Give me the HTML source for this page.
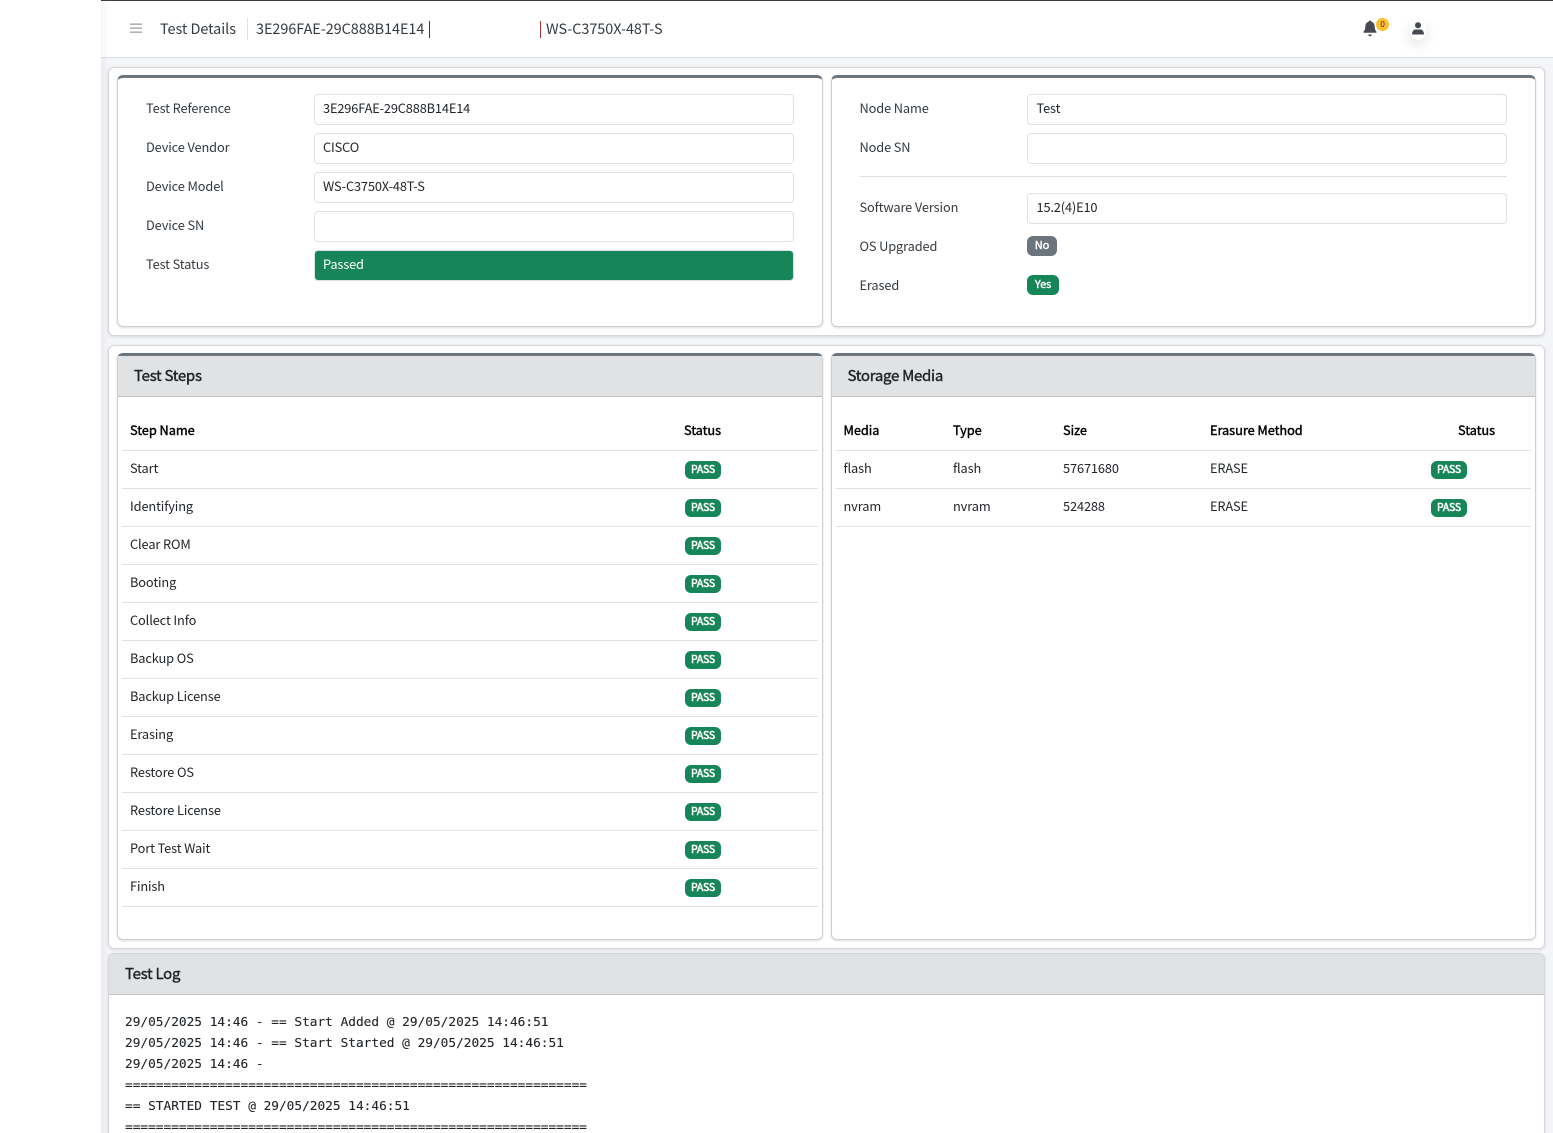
<!DOCTYPE html>
<html><head><meta charset="utf-8">
<style>
*{box-sizing:border-box}
html,body{margin:0;padding:0;width:1553px;height:1133px;overflow:hidden;background:#fff}
body{font-family:"Noto Sans CJK JP","Liberation Sans",sans-serif;font-size:12.8px;letter-spacing:-.12px;color:#212529;position:relative}
.a{position:absolute}
.t{position:absolute;white-space:nowrap;line-height:20px;height:20px;transform:translateY(-1px)}
.t.h{font-size:14.4px;letter-spacing:-.03px;color:#343a40;transform:none}
.lbl{color:#343a40}
.card{position:absolute;background:#fff;border:1px solid #d6d7da;border-radius:6px;box-shadow:0 1px 3px rgba(0,0,0,.12)}
.in{position:absolute;background:#fff;border:1px solid #cfd0d3;border-top:3px solid #6c757d;border-radius:6px;box-shadow:0 1px 2px rgba(0,0,0,.14)}
.hd{position:absolute;background:#e1e2e4;border-bottom:1px solid #bfc1c4;font-weight:400;font-size:15px;letter-spacing:-.28px;-webkit-text-stroke:.4px #212529;color:#212529}
.inp{position:absolute;background:#fff;border:1px solid #dee2e6;border-radius:4px;height:31px;line-height:26px;padding-left:8px;color:#212529;font-size:12.8px;letter-spacing:-.15px}
.ln{position:absolute;height:1px;background:#dee2e6}
.b{font-weight:400;color:#000;letter-spacing:-.06px;-webkit-text-stroke:.4px #000}
.p{position:absolute;width:36px;height:18px;border-radius:6px;background:#168558;color:#fff;font-size:10.5px;font-weight:400;letter-spacing:-.2px;-webkit-text-stroke:.5px #fff;text-align:center;line-height:18px}
.log{position:absolute;left:125px;font-family:"DejaVu Sans Mono","Liberation Mono",monospace;font-size:12.8px;letter-spacing:-.005px;line-height:21px;height:21px;white-space:pre;color:#212529;-webkit-text-stroke:.1px #212529}
</style></head>
<body>
<div class="a" style="left:101px;top:0;width:1452px;height:1133px;background:#f4f5f8"></div>
<div class="a" style="left:101px;top:0;width:1452px;height:58px;background:#fff;border-top:1px solid #3b3f43;border-bottom:1px solid #dcdde0"></div>
<div class="a" style="left:101px;top:1px;width:8px;height:1132px;background:linear-gradient(90deg,rgba(0,0,0,.035),rgba(0,0,0,0))"></div>

<svg class="a" style="left:130px;top:23px" width="12" height="11" viewBox="0 0 12 11"><path d="M0 1.200h12M0 5.200h12M0 9.200h12" stroke="#b0b4b8" stroke-width="1.600"/></svg>
<div class="t h" style="left:160px;top:19px">Test Details</div>
<div class="a" style="left:247px;top:18px;width:1px;height:22px;background:#dee2e6"></div>
<div class="t h" style="left:256px;top:19px">3E296FAE-29C888B14E14</div>
<div class="a" style="left:429px;top:21px;width:1px;height:17px;background:#343a40"></div>
<div class="a" style="left:540px;top:21px;width:1px;height:17px;background:#a33"></div>
<div class="t h" style="left:546px;top:19px">WS-C3750X-48T-S</div>

<svg class="a" style="left:1363px;top:20px" width="14" height="17" viewBox="0 0 14 17"><path d="M7 0.500c.8 0 1.300.6 1.300 1.300 2.400.6 3.400 2.600 3.400 5 0 2.600.7 3.700 1.800 5v1H.5v-1c1.100-1.300 1.800-2.400 1.800-5 0-2.400 1-4.400 3.400-5C5.700 1.100 6.200.5 7 .5zM5.200 14.500h3.600C8.800 15.500 8 16.300 7 16.300s-1.800-.8-1.800-1.800z" fill="#454a50"/></svg>
<div class="a" style="left:1376px;top:18px;width:13px;height:13px;border-radius:50%;background:#fdbf2d;color:#333;font-size:8.500px;text-align:center;line-height:13px">0</div>
<div class="a" style="left:1410px;top:18px;width:16px;height:22px;border-radius:8px;background:#fff;box-shadow:0 6px 12px rgba(0,0,0,.1)"></div>
<svg class="a" style="left:1412px;top:22px" width="12" height="13" viewBox="0 0 12 13"><circle cx="6" cy="3.200" r="3" fill="#454a50"/><path d="M0 12.500c0-3.500 2-5 3.500-5h5c1.500 0 3.500 1.500 3.500 5z" fill="#454a50"/></svg>

<!-- Card 1 -->
<div class="card" style="left:108px;top:67px;width:1437px;height:269px"></div>
<div class="in" style="left:117px;top:75px;width:706px;height:252px"></div>
<div class="in" style="left:831px;top:75px;width:705px;height:252px"></div>

<div class="t lbl" style="left:146px;top:99px">Test Reference</div>
<div class="inp" style="left:314px;top:94px;width:480px">3E296FAE-29C888B14E14</div>
<div class="t lbl" style="left:146px;top:138px">Device Vendor</div>
<div class="inp" style="left:314px;top:133px;width:480px">CISCO</div>
<div class="t lbl" style="left:146px;top:177px">Device Model</div>
<div class="inp" style="left:314px;top:172px;width:480px">WS-C3750X-48T-S</div>
<div class="t lbl" style="left:146px;top:216px">Device SN</div>
<div class="inp" style="left:314px;top:211px;width:480px"></div>
<div class="t lbl" style="left:146px;top:255px">Test Status</div>
<div class="inp" style="left:314px;top:250px;width:480px;background:#168558;color:#fff">Passed</div>

<div class="t lbl" style="left:859.5px;top:99px">Node Name</div>
<div class="inp" style="left:1027px;top:94px;width:480px;padding-left:8.5px">Test</div>
<div class="t lbl" style="left:859.5px;top:138px">Node SN</div>
<div class="inp" style="left:1027px;top:133px;width:480px"></div>
<div class="ln" style="left:860px;top:176px;width:647px"></div>
<div class="t lbl" style="left:859.5px;top:198px">Software Version</div>
<div class="inp" style="left:1027px;top:193px;width:480px;padding-left:8.5px">15.2(4)E10</div>
<div class="t lbl" style="left:859.5px;top:237px">OS Upgraded</div>
<div class="a" style="left:1027px;top:236px;width:30px;height:20px;border-radius:6px;background:#6c757d;color:#fff;font-size:11px;-webkit-text-stroke:.4px #fff;text-align:center;line-height:18px">No</div>
<div class="t lbl" style="left:859.5px;top:276px">Erased</div>
<div class="a" style="left:1027px;top:275px;width:32px;height:20px;border-radius:6px;background:#168558;color:#fff;font-size:11px;-webkit-text-stroke:.4px #fff;text-align:center;line-height:18px">Yes</div>

<!-- Card 2 -->
<div class="card" style="left:108px;top:345px;width:1437px;height:604px"></div>
<div class="in" style="left:117px;top:353px;width:706px;height:587px"></div>
<div class="in" style="left:831px;top:353px;width:705px;height:587px"></div>
<div class="hd" style="left:118px;top:356px;width:704px;height:41px;padding-left:16px;line-height:40px">Test Steps</div>
<div class="hd" style="left:832px;top:356px;width:703px;height:41px;padding-left:15.5px;line-height:40px">Storage Media</div>

<div class="t b" style="left:130px;top:421px">Step Name</div>
<div class="t b" style="left:684px;top:421px">Status</div>
<div class="ln" style="left:122px;top:450px;width:696px"></div>

<div class="t" style="left:130px;top:459px">Start</div><div class="p" style="left:685px;top:461px">PASS</div><div class="ln" style="left:122px;top:488px;width:696px"></div>
<div class="t" style="left:130px;top:497px">Identifying</div><div class="p" style="left:685px;top:499px">PASS</div><div class="ln" style="left:122px;top:526px;width:696px"></div>
<div class="t" style="left:130px;top:535px">Clear ROM</div><div class="p" style="left:685px;top:537px">PASS</div><div class="ln" style="left:122px;top:564px;width:696px"></div>
<div class="t" style="left:130px;top:573px">Booting</div><div class="p" style="left:685px;top:575px">PASS</div><div class="ln" style="left:122px;top:602px;width:696px"></div>
<div class="t" style="left:130px;top:611px">Collect Info</div><div class="p" style="left:685px;top:613px">PASS</div><div class="ln" style="left:122px;top:640px;width:696px"></div>
<div class="t" style="left:130px;top:649px">Backup OS</div><div class="p" style="left:685px;top:651px">PASS</div><div class="ln" style="left:122px;top:678px;width:696px"></div>
<div class="t" style="left:130px;top:687px">Backup License</div><div class="p" style="left:685px;top:689px">PASS</div><div class="ln" style="left:122px;top:716px;width:696px"></div>
<div class="t" style="left:130px;top:725px">Erasing</div><div class="p" style="left:685px;top:727px">PASS</div><div class="ln" style="left:122px;top:754px;width:696px"></div>
<div class="t" style="left:130px;top:763px">Restore OS</div><div class="p" style="left:685px;top:765px">PASS</div><div class="ln" style="left:122px;top:792px;width:696px"></div>
<div class="t" style="left:130px;top:801px">Restore License</div><div class="p" style="left:685px;top:803px">PASS</div><div class="ln" style="left:122px;top:830px;width:696px"></div>
<div class="t" style="left:130px;top:839px">Port Test Wait</div><div class="p" style="left:685px;top:841px">PASS</div><div class="ln" style="left:122px;top:868px;width:696px"></div>
<div class="t" style="left:130px;top:877px">Finish</div><div class="p" style="left:685px;top:879px">PASS</div><div class="ln" style="left:122px;top:906px;width:696px"></div>

<div class="t b" style="left:843.5px;top:421px">Media</div>
<div class="t b" style="left:953px;top:421px">Type</div>
<div class="t b" style="left:1063px;top:421px">Size</div>
<div class="t b" style="left:1210px;top:421px">Erasure Method</div>
<div class="t b" style="left:1458px;top:421px">Status</div>
<div class="ln" style="left:836px;top:450px;width:695px"></div>
<div class="t" style="left:843.5px;top:459px">flash</div>
<div class="t" style="left:953px;top:459px">flash</div>
<div class="t" style="left:1063px;top:459px">57671680</div>
<div class="t" style="left:1210px;top:459px">ERASE</div>
<div class="p" style="left:1431px;top:461px">PASS</div>
<div class="ln" style="left:836px;top:488px;width:695px"></div>
<div class="t" style="left:843.5px;top:497px">nvram</div>
<div class="t" style="left:953px;top:497px">nvram</div>
<div class="t" style="left:1063px;top:497px">524288</div>
<div class="t" style="left:1210px;top:497px">ERASE</div>
<div class="p" style="left:1431px;top:499px">PASS</div>
<div class="ln" style="left:836px;top:526px;width:695px"></div>

<!-- Log -->
<div class="card" style="left:108px;top:953px;width:1437px;height:200px"></div>
<div class="hd" style="left:109px;top:954px;width:1435px;height:41px;padding-left:16px;line-height:40px;border-radius:5px 5px 0 0">Test Log</div>
<div class="log" style="top:1012px">29/05/2025 14:46 - == Start Added @ 29/05/2025 14:46:51</div>
<div class="log" style="top:1033px">29/05/2025 14:46 - == Start Started @ 29/05/2025 14:46:51</div>
<div class="log" style="top:1054px">29/05/2025 14:46 -</div>
<div class="log" style="top:1075px">============================================================</div>
<div class="log" style="top:1096px">== STARTED TEST @ 29/05/2025 14:46:51</div>
<div class="log" style="top:1117px">============================================================</div>
</body></html>
